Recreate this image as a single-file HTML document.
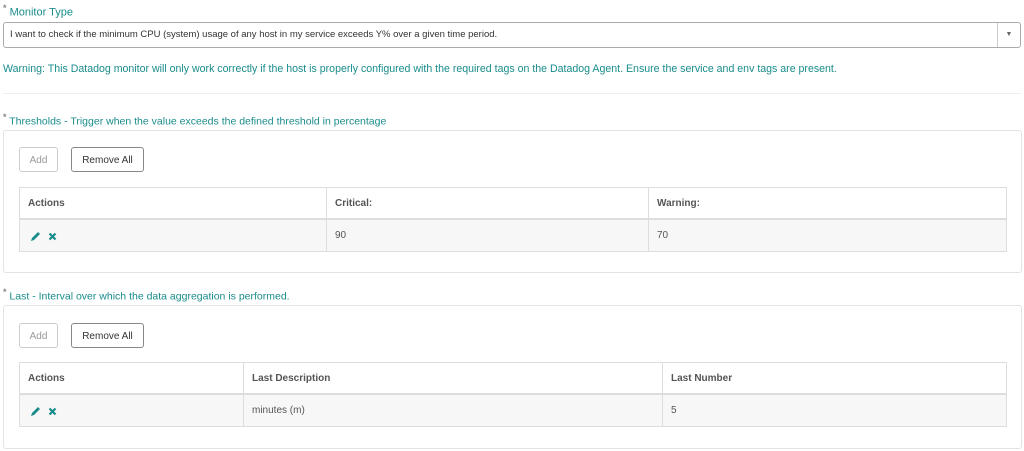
<!DOCTYPE html><html><head><style>
body{margin:0;background:#fff;font-family:"Liberation Sans",sans-serif;color:#333;width:1024px;height:451px;position:relative;overflow:hidden}
.a{position:absolute}
.lbl{color:#1a8c8c;font-size:11px}
.lbl sup{color:#888;font-size:9px;font-weight:bold}
.panel{border:1px solid #e3e3e3;border-radius:3px}
.btn{border:1px solid #888;border-radius:3px;font-size:10px;height:25px;line-height:25px;text-align:center;box-sizing:border-box}
table{border-collapse:collapse;font-size:10px}
td{border:1px solid #ddd;padding:0 8px}
.h td{font-weight:bold;color:#555;height:30px;background:#fff}
.r td{background:#f7f7f7;height:31px;color:#555}
.h{border-bottom:2px solid #ddd}
svg{display:block;margin-top:2px}
</style></head><body>
<div class="a lbl" style="left:3px;top:3px"><sup>*</sup> Monitor Type</div>
<div class="a" style="left:3px;top:22px;width:1018px;height:26px;border:1px solid #aaa;border-radius:3px;box-sizing:border-box;font-size:9.5px;line-height:24px;padding-left:6px;color:#333">I want to check if the minimum CPU (system) usage of any host in my service exceeds Y% over a given time period.
<div class="a" style="right:0;top:0;width:22px;height:24px;border-left:1px solid #ccc;text-align:center;font-size:7px;color:#666">▼</div></div>
<div class="a lbl" style="left:3px;top:63px;font-size:10.6px">Warning: This Datadog monitor will only work correctly if the host is properly configured with the required tags on the Datadog Agent. Ensure the service and env tags are present.</div>
<div class="a" style="left:3px;top:93px;width:1018px;border-top:1px solid #eee"></div>
<div class="a lbl" style="left:3px;top:112px;font-size:10.5px"><sup>*</sup> Thresholds - Trigger when the value exceeds the defined threshold in percentage</div>
<div class="a panel" style="left:3px;top:130px;width:1017px;height:141px"></div>
<div class="a btn" style="left:19px;top:147px;width:39px;border-color:#ccc;color:#999">Add</div>
<div class="a btn" style="left:71px;top:147px;width:73px">Remove All</div>
<table class="a" style="left:19px;top:187px;width:988px">
<tr class="h"><td style="width:290px">Actions</td><td style="width:305px">Critical:</td><td>Warning:</td></tr>
<tr class="r"><td><svg width="40" height="11" viewBox="0 0 40 11"><path d="M3 10 L4 7 L10 1 L12 3 L6 9 Z" fill="#1a8c8c"/><path d="M21.5 2.5 L27.5 8.5 M27.5 2.5 L21.5 8.5" stroke="#1a8c8c" stroke-width="2.2"/></svg></td><td>90</td><td>70</td></tr></table>
<div class="a lbl" style="left:3px;top:287px;font-size:10.5px"><sup>*</sup> Last - Interval over which the data aggregation is performed.</div>
<div class="a panel" style="left:3px;top:305px;width:1017px;height:142px"></div>
<div class="a btn" style="left:19px;top:323px;width:39px;border-color:#ccc;color:#999">Add</div>
<div class="a btn" style="left:71px;top:323px;width:73px">Remove All</div>
<table class="a" style="left:19px;top:362px;width:988px">
<tr class="h"><td style="width:207px">Actions</td><td style="width:402px">Last Description</td><td>Last Number</td></tr>
<tr class="r"><td><svg width="40" height="11" viewBox="0 0 40 11"><path d="M3 10 L4 7 L10 1 L12 3 L6 9 Z" fill="#1a8c8c"/><path d="M21.5 2.5 L27.5 8.5 M27.5 2.5 L21.5 8.5" stroke="#1a8c8c" stroke-width="2.2"/></svg></td><td>minutes (m)</td><td>5</td></tr></table>
</body></html>
